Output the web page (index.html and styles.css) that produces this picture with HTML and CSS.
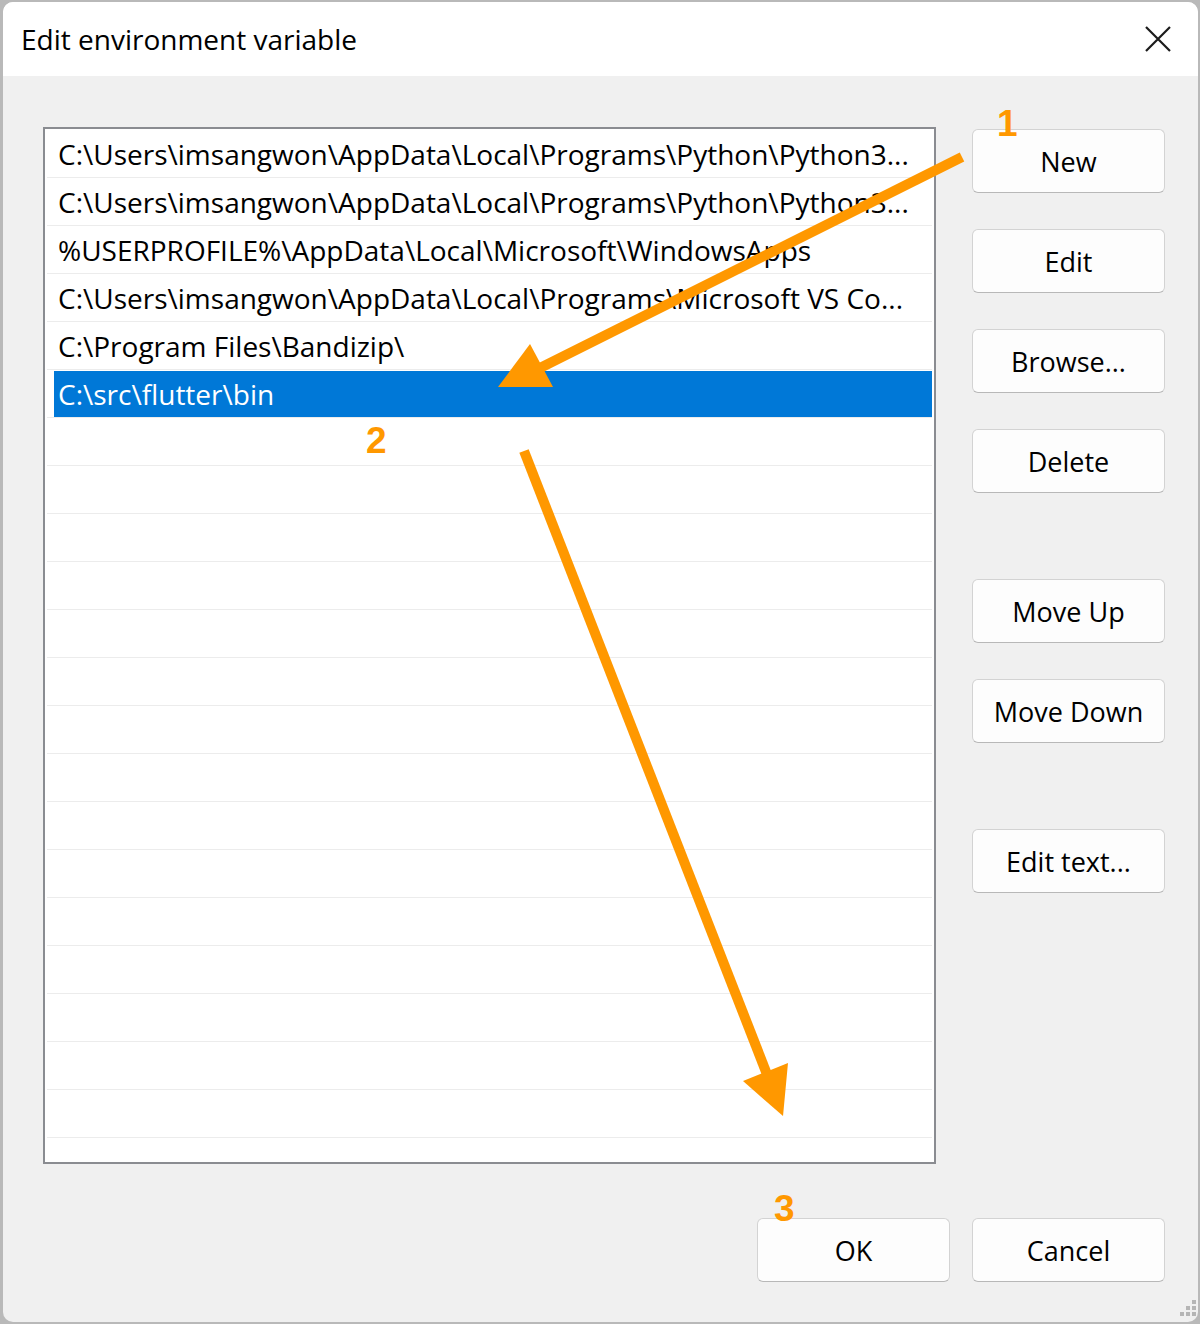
FILE: index.html
```html
<!DOCTYPE html>
<html>
<head>
<meta charset="utf-8">
<link rel="stylesheet" href="styles.css">
<title>Edit environment variable</title>
</head>
<body>
<div class="window">
  <div class="titlebar">
    <span class="title">Edit environment variable</span>
    <svg class="close" width="28" height="28" viewBox="0 0 28 28"><path d="M2 2 L26 26 M26 2 L2 26" stroke="#1b1b1b" stroke-width="2.2" fill="none"/></svg>
  </div>
  <div class="content">
    <div class="main">
      <div class="list">
        <div class="row"><span class="cell">C:\Users\imsangwon\AppData\Local\Programs\Python\Python3...</span></div>
        <div class="row"><span class="cell">C:\Users\imsangwon\AppData\Local\Programs\Python\Python3...</span></div>
        <div class="row"><span class="cell">%USERPROFILE%\AppData\Local\Microsoft\WindowsApps</span></div>
        <div class="row"><span class="cell">C:\Users\imsangwon\AppData\Local\Programs\Microsoft VS Co...</span></div>
        <div class="row"><span class="cell">C:\Program Files\Bandizip\</span></div>
        <div class="row"><span class="cell selected">C:\src\flutter\bin</span></div>
        <div class="row"></div><div class="row"></div><div class="row"></div><div class="row"></div>
        <div class="row"></div><div class="row"></div><div class="row"></div><div class="row"></div>
        <div class="row"></div><div class="row"></div><div class="row"></div><div class="row"></div>
        <div class="row"></div><div class="row"></div><div class="row"></div><div class="row"></div>
      </div>
      <div class="side">
        <div class="btn">New</div>
        <div class="btn">Edit</div>
        <div class="btn">Browse...</div>
        <div class="btn">Delete</div>
        <div class="btn gap">Move Up</div>
        <div class="btn">Move Down</div>
        <div class="btn gap">Edit text...</div>
      </div>
    </div>
    <div class="footer">
      <div class="btn">OK</div>
      <div class="btn">Cancel</div>
    </div>
  </div>
  <svg class="grip" width="26" height="24" viewBox="0 0 26 24">
    <rect x="20" y="2" width="4" height="4" fill="#b5b5b5"/>
    <rect x="14" y="8" width="4" height="4" fill="#b5b5b5"/>
    <rect x="20" y="8" width="4" height="4" fill="#b5b5b5"/>
    <rect x="8" y="14" width="4" height="4" fill="#b5b5b5"/>
    <rect x="14" y="14" width="4" height="4" fill="#b5b5b5"/>
    <rect x="20" y="14" width="4" height="4" fill="#b5b5b5"/>
  </svg>
</div>
<svg class="annot" width="1200" height="1324" viewBox="0 0 1200 1324">
  <line x1="962" y1="157" x2="532" y2="372" stroke="#ff9800" stroke-width="10"/>
  <polygon points="530,344 498,387 553,387" fill="#ff9800"/>
  <line x1="524" y1="451" x2="770" y2="1082" stroke="#ff9800" stroke-width="10"/>
  <polygon points="743,1081 788,1063 783,1116" fill="#ff9800"/>
</svg>
<span class="num n1">1</span>
<span class="num n2">2</span>
<span class="num n3">3</span>
</body>
</html>
```
FILE: styles.css
```css
html, body {
  margin: 0;
  padding: 0;
}
body {
  width: 1200px;
  height: 1324px;
  background: #b9b9b9;
  position: relative;
  overflow: hidden;
  font-family: "Open Sans", "Noto Sans", sans-serif;
}
.window {
  position: relative;
  margin: 2px 0 0 3px;
  width: 1195px;
  height: 1320px;
  border-radius: 10px;
  overflow: hidden;
  background: #f0f0f0;
  display: flex;
  flex-direction: column;
}
.titlebar {
  height: 74px;
  background: #ffffff;
  display: flex;
  align-items: center;
  justify-content: space-between;
  padding: 0 26px 0 18px;
  flex-shrink: 0;
}
.title {
  font-size: 28px;
  color: #000;
  margin-top: 0;
}
.close {
  display: block;
}
.content {
  padding: 51px 33px 0 40px;
  display: flex;
  flex-direction: column;
}
.main {
  display: flex;
  gap: 36px;
  align-items: flex-start;
}
.list {
  flex-shrink: 0;
  width: 885px;
  height: 1032px;
  border: 2px solid #8a8c91;
  background: #fff;
  overflow: hidden;
  padding: 1px 2px 0 2px;
}
.row {
  height: 47px;
  border-bottom: 1px solid #ececec;
  display: flex;
  align-items: center;
  font-size: 28px;
  color: #000;
  white-space: nowrap;
}
.cell {
  display: block;
  padding-left: 11px;
  line-height: 46px;
}
.cell.selected {
  margin-left: 7px;
  padding-left: 4px;
  width: 874px;
  background: #0078d7;
  color: #fff;
}
.side {
  flex-shrink: 0;
  width: 193px;
  display: flex;
  flex-direction: column;
  gap: 36px;
  padding-top: 2px;
}
.btn {
  width: 191px;
  height: 62px;
  background: #fdfdfd;
  border: 1px solid #d3d3d3;
  border-bottom-color: #b8b8b8;
  border-radius: 6px;
  display: flex;
  align-items: center;
  justify-content: center;
  font-size: 27px;
  color: #000;
}
.btn.gap {
  margin-top: 50px;
}
.footer {
  display: flex;
  justify-content: flex-end;
  gap: 22px;
  margin-top: 54px;
}
.grip {
  position: absolute;
  right: 0;
  bottom: 0;
}
.annot {
  position: absolute;
  top: 0;
  left: 0;
  pointer-events: none;
}
.num {
  position: absolute;
  font-family: "Liberation Sans", Arial, sans-serif;
  font-weight: bold;
  font-size: 37px;
  line-height: 1;
  color: #ff9800;
}
.n1 { left: 997px; top: 105px; }
.n2 { left: 366px; top: 422px; }
.n3 { left: 774px; top: 1190px; }
```
